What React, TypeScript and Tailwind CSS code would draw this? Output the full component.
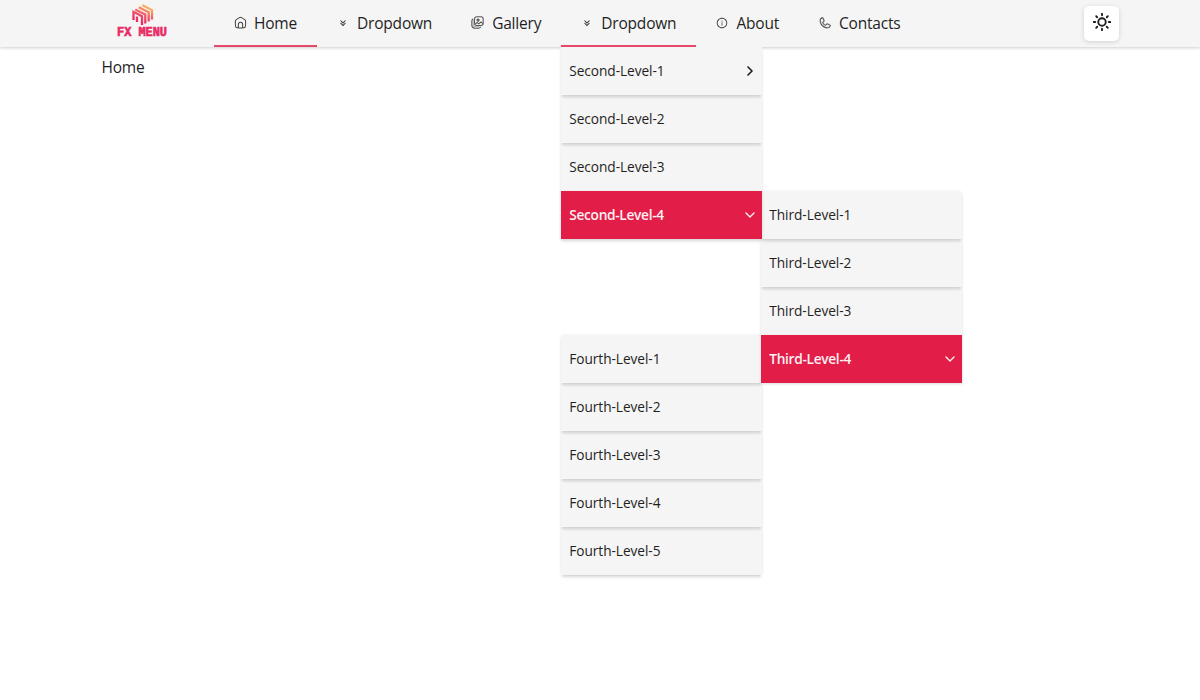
import type { ReactNode } from "react";
import { BiChevronsDown } from "react-icons/bi";
import { AiOutlineInfoCircle } from "react-icons/ai";
import { PiPhone } from "react-icons/pi";
import { FiSun, FiChevronDown, FiChevronRight } from "react-icons/fi";

function HomeIcon() {
  return (
    <svg className="size-[13px] text-[#444]" viewBox="0 0 24 24" fill="none" stroke="currentColor" strokeWidth="1.9" strokeLinejoin="round">
      <path d="M2.5 12.2c0-2.3 0-3.4.5-4.3s1.500-1.500 3.400-2.700l2-1.200C10.200 2.800 11.100 2.200 12 2.200s1.800.6 3.600 1.800l2 1.200c1.900 1.200 2.900 1.800 3.400 2.700s.5 2 .5 4.300v1.500c0 3.900 0 5.900-1.200 7.100S17.300 22 13.500 22h-3c-3.800 0-5.600 0-6.800-1.200s-1.200-3.200-1.200-7.100z" />
      <path d="M8 22v-6.500a4 4 0 0 1 8 0V22" />
    </svg>
  );
}

function GalleryIcon() {
  return (
    <svg className="-ml-px size-[13px] text-[#555]" viewBox="0 0 24 24" fill="none" stroke="currentColor" strokeWidth="1.9" strokeLinecap="round" strokeLinejoin="round">
      <rect x="6.500" y="1.500" width="16" height="16" rx="4" />
      <path d="M3.500 5.500c-1.500.8-2 2-2 4V17c0 4 1.500 5.500 5.500 5.500h6.500c2.200 0 3.500-.5 4.200-2" />
      <path d="M4 8v7c0 3.500 1.500 5 5 5h6" strokeOpacity="0.5" />
      <circle cx="13" cy="7.500" r="2" fill="currentColor" />
      <path d="m7.500 15 4-3 3 2.500 4-3.500 3 2.500" />
    </svg>
  );
}

function Logo() {
  return (
    <svg className="h-[38px] w-[54px]" viewBox="0 0 54 38" role="img" aria-label="FX Menu">
      <defs>
        <linearGradient id="cube" gradientUnits="userSpaceOnUse" x1="22" y1="20" x2="31" y2="1">
          <stop offset="0" stopColor="#ea1f63" />
          <stop offset="0.45" stopColor="#ee5068" />
          <stop offset="1" stopColor="#f9c95f" />
        </linearGradient>
      </defs>
      <g fill="none" stroke="url(#cube)" strokeWidth="2.3">
        <path d="M18.500 17V8.800L27 13.300V22" />
        <path d="M22 19V13.500" />
        <path d="M20.300 6.500 30.300 11.500V20.500" />
        <path d="M23.800 4.300 33.700 9.300V18.500" />
        <path d="M27.300 2.100 37 7.100V16.500" />
      </g>
      <text x="2" y="32.500" textLength="50" lengthAdjust="spacingAndGlyphs" fill="#ea2a63" stroke="#ea2a63" strokeWidth="0.6" className="font-['Liberation_Mono',monospace] text-[12px] font-bold">
        FX MENU
      </text>
    </svg>
  );
}

function NavItem({ icon, label, active = false, children }: { icon: ReactNode; label: string; active?: boolean; children?: ReactNode }) {
  return (
    <li className="relative">
      <a
        href="#"
        className={`flex h-[47px] items-center border-b-2 px-5 ${active ? "border-[#e11d48]/80" : "border-transparent"}`}
      >
        <span className="flex w-5 items-center">{icon}</span>
        <span className="pt-[2px] text-[15.5px] tracking-[-0.2px]">{label}</span>
      </a>
      {children}
    </li>
  );
}

function MenuItem({ label, open = false, arrow = false, children }: { label: string; open?: boolean; arrow?: boolean; children?: ReactNode }) {
  return (
    <li className="relative">
      <a
        href="#"
        className={`flex h-12 items-center justify-between px-2 text-[13.7px] ${
          open
            ? "relative z-10 bg-[#e11d48] font-semibold tracking-[-0.3px] text-[#fff0f3] shadow-[0_1px_3px_rgba(0,0,0,0.12)]"
            : "tracking-[-0.06px] shadow-[0_3px_3px_-1px_rgba(0,0,0,0.16)]"
        }`}
      >
        <span>{label}</span>
        {open && <FiChevronDown className="-mr-1 size-4" />}
        {arrow && <FiChevronRight className="-mr-1 size-4" strokeWidth={2.5} />}
      </a>
      {children}
    </li>
  );
}

const panel = "absolute w-[200.5px] bg-[#f5f5f5]";
const floating = "rounded-sm shadow-[0_0_3px_rgba(0,0,0,0.07)]";

export default function App() {
  return (
    <div className="h-[700px] overflow-hidden bg-white font-['Open_Sans','Noto_Sans',sans-serif] text-[#1f1f1f]">
      <header className="relative flex h-[47px] items-center bg-[#f5f5f5] pr-[81px] pl-[115px] shadow-[0_1px_3px_rgba(0,0,0,0.2)]">
        <div className="w-[99px] pb-[3px]">
          <Logo />
        </div>
        <ul className="flex">
          <NavItem icon={<HomeIcon />} label="Home" active />
          <NavItem icon={<BiChevronsDown className="size-3 text-[#333]" />} label="Dropdown" />
          <NavItem icon={<GalleryIcon />} label="Gallery" />
          <NavItem icon={<BiChevronsDown className="size-3 text-[#333]" />} label="Dropdown" active>
            <ul className={`${panel} top-full left-0 shadow-[0_3px_3px_rgba(0,0,0,0.07)]`}>
              <MenuItem label="Second-Level-1" arrow />
              <MenuItem label="Second-Level-2" />
              <MenuItem label="Second-Level-3" />
              <MenuItem label="Second-Level-4" open>
                <ul className={`${panel} ${floating} top-0 left-[200px]`}>
                  <MenuItem label="Third-Level-1" />
                  <MenuItem label="Third-Level-2" />
                  <MenuItem label="Third-Level-3" />
                  <MenuItem label="Third-Level-4" open>
                    <ul className={`${panel} ${floating} top-0 -left-[200px]`}>
                      <MenuItem label="Fourth-Level-1" />
                      <MenuItem label="Fourth-Level-2" />
                      <MenuItem label="Fourth-Level-3" />
                      <MenuItem label="Fourth-Level-4" />
                      <MenuItem label="Fourth-Level-5" />
                    </ul>
                  </MenuItem>
                </ul>
              </MenuItem>
            </ul>
          </NavItem>
          <NavItem icon={<AiOutlineInfoCircle className="size-3 text-[#444]" />} label="About" />
          <NavItem icon={<PiPhone className="-ml-px size-[14px] text-[#555]" strokeWidth={4} />} label="Contacts" />
        </ul>
        <button aria-label="Toggle theme" className="ml-auto flex size-[35px] items-center justify-center rounded-[5px] bg-white pb-[3px] shadow-[0_1px_5px_rgba(0,0,0,0.15)]">
          <FiSun className="size-[18px]" strokeWidth={2.5} />
        </button>
      </header>
      <main className="pt-[8px] pl-[101.5px] text-[15.5px] leading-6 tracking-[-0.2px]">Home</main>
    </div>
  );
}
